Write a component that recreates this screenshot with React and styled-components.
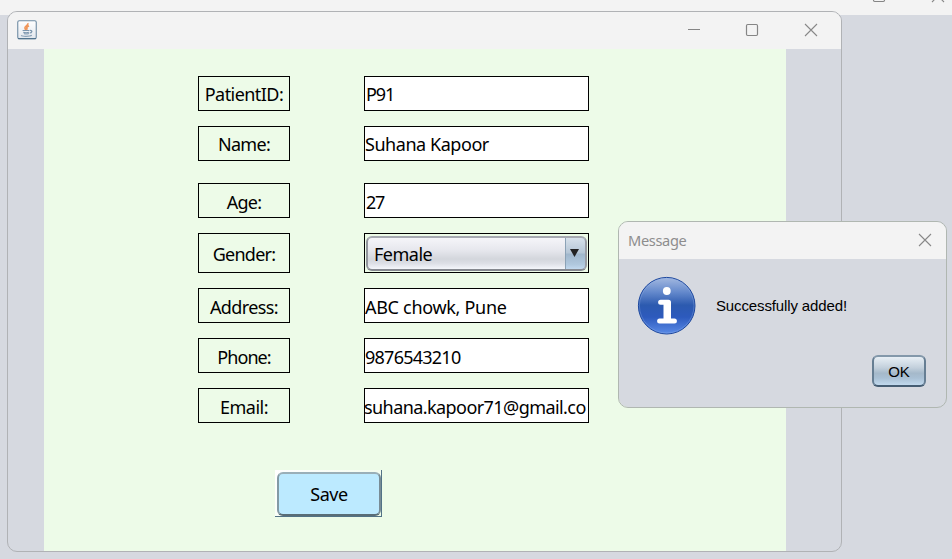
import React from "react";
import styled, { createGlobalStyle } from "styled-components";

const GlobalStyle = createGlobalStyle`
  * { box-sizing: border-box; }
  body { margin: 0; overflow: hidden; }
`;

const Desktop = styled.main`
  position: relative;
  width: 952px;
  height: 559px;
  overflow: hidden;
  background: #d6d9e0;
  font-family: "Noto Sans", sans-serif;
  color: #000;
`;

const BackBar = styled.div`
  display: flex;
  justify-content: flex-end;
  gap: 45px;
  height: 15px;
  padding-right: 7px;
  background: #f3f3f3;
  svg { margin-top: -11px; }
`;

const Frame = styled.section`
  position: absolute;
  left: ${(p) => p.$x}px;
  top: ${(p) => p.$y}px;
  width: ${(p) => p.$w}px;
  height: ${(p) => p.$h}px;
  display: flex;
  flex-direction: column;
  overflow: hidden;
  border: 1px solid ${(p) => p.$edge};
  border-radius: ${(p) => p.$radius}px;
  background: #d6d9e0;
  background-clip: padding-box;
`;

const TitleBar = styled.header`
  display: flex;
  align-items: center;
  justify-content: space-between;
  flex: none;
  height: 37px;
  padding: 0 ${(p) => p.$right}px ${(p) => p.$lift || 0}px 9px;
  background: #f3f3f3;
`;

const Controls = styled.div`
  display: flex;
  gap: 44px;
  svg:last-child { margin-left: 1px; }
`;

const DialogTitle = styled.span`
  color: #8d8d8d;
  font-size: 14.6px;
  letter-spacing: -0.35px;
  line-height: 20px;
`;

const Panel = styled.div`
  flex: 1;
  display: flex;
  flex-direction: column;
  margin: 0 55px 0 36px;
  padding: 27px 0 0 154px;
  background: #edfbe8;
`;

const Row = styled.div`
  display: flex;
  gap: 74px;
  flex: none;
  height: ${(p) => p.$h || 35}px;
  margin-bottom: ${(p) => p.$after || 15}px;
`;

const Text = styled.span`
  flex: none;
  font-size: 18px;
  line-height: 24px;
  white-space: pre;
  letter-spacing: ${(p) => p.$track || 0}px;
  margin-left: ${(p) => p.$shift || 0}px;
`;

const LabelBox = styled.div`
  width: 92px;
  border: 1px solid #000;
  display: flex;
  align-items: center;
  justify-content: center;
  padding-top: ${(p) => p.$top ?? 2}px;
`;

const Field = styled.div`
  width: 225px;
  overflow: hidden;
  display: flex;
  align-items: center;
  border: 1px solid #000;
  background: #fff;
  padding-top: ${(p) => p.$top ?? 2}px;
`;

const ComboFrame = styled.div`
  display: flex;
  width: 225px;
  padding: 1px 1px 1px 1px;
  border: 1px solid #000;
`;

const Combo = styled.div`
  flex: 1;
  display: flex;
  overflow: hidden;
  margin-top: 1px;
  border: 2px solid;
  border-color: #a6a9b1 #9a9da5 #85888f #92959d;
  border-radius: 6px;
  background: linear-gradient(#f5f5f9 0%, #e6e7ed 40%, #d3d6dc 68%, #dddfe6 82%, #f4f6fb 100%);
`;

const ComboValue = styled.div`
  flex: 1;
  display: flex;
  align-items: center;
  padding-left: 6px;
`;

const ComboArrow = styled.div`
  display: flex;
  align-items: center;
  justify-content: center;
  width: 22px;
  margin: -2px -2px -2px 0;
  padding-right: 2px;
  padding-bottom: 2px;
  border: 2px solid;
  border-color: #8297ab #7087a0 #56718b #8ba2b6;
  border-left-width: 1px;
  border-radius: 0 6px 6px 0;
  background: linear-gradient(#d7e1eb 0%, #b5c6d6 48%, #a0b7cc 52%, #b0c8de 85%, #c2d9ef 100%);
`;

const SaveFrame = styled.div`
  width: 107px;
  height: 47px;
  margin: 32px 0 0 77px;
  padding: 2px 0 0 2px;
  border-right: 1px solid #527286;
  border-bottom: 1px solid #527286;
  background: linear-gradient(135deg, #fff, #edfbe8);
`;

const SaveButton = styled.button`
  display: flex;
  align-items: center;
  justify-content: center;
  width: 104px;
  height: 44px;
  padding: 0;
  border: 2px solid;
  border-color: #9aafb8 #788c96 #596d77 #839aa5;
  border-radius: 6px;
  background: #bceaff;
  font-family: inherit;
  color: #000;
`;

const DialogBody = styled.div`
  flex: 1;
  display: flex;
  flex-direction: column;
  justify-content: space-between;
  padding: 17px 20px 20px 18px;
`;

const MessageLine = styled.div`
  display: flex;
  align-items: center;
  gap: 19px;
  font: 15px/20px "Liberation Sans", sans-serif;
  letter-spacing: -0.13px;
`;

const OkButton = styled.button`
  align-self: flex-end;
  width: 54px;
  height: 32px;
  padding: 1px 0 0;
  border: 2px solid;
  border-color: #8398aa #667e93 #455d73 #667e93;
  border-radius: 6px;
  background: linear-gradient(#e8eff5 0%, #c3d0dc 38%, #a5b9ca 58%, #a9c0d4 75%, #c1d9ee 100%);
  font: 15px/20px "Liberation Sans", sans-serif;
  color: #000;
`;

const Close = () => (
  <svg width="14" height="14" viewBox="0 0 14 14" fill="none" stroke="#888" strokeWidth="1.1">
    <path d="M1 1 13 13M13 1 1 13" />
  </svg>
);
const Maximize = () => (
  <svg width="14" height="14" viewBox="0 0 14 14" fill="none" stroke="#858585" strokeWidth="1.2">
    <rect x="1.5" y="1.5" width="11" height="11" rx="1.2" />
  </svg>
);
const Minimize = () => (
  <svg width="14" height="14" viewBox="0 0 14 14" stroke="#858585">
    <path d="M1 6.5H13" />
  </svg>
);

const JavaIcon = () => (
  <svg width="20" height="20" viewBox="0 0 20 20" fill="none">
    <defs>
      <linearGradient id="tile" x1="0" y1="0" x2="0" y2="1">
        <stop offset="0" stopColor="#fff" />
        <stop offset="1" stopColor="#e2e7ed" />
      </linearGradient>
    </defs>
    <rect x=".75" y=".75" width="18.5" height="18" rx="1.5" fill="url(#tile)" stroke="#6e8ba3" strokeWidth="1.1" />
    <path d="M1 18.7H19" stroke="#466985" strokeWidth="1" />
    <path d="M10.8 3.2C12 5.5 7 6.3 8 8.3Q8.2 9.2 9.2 10M12 5.8C10 6.8 8.8 7.7 10.4 9.6" stroke="#f0965a" strokeWidth="1.7" />
    <path d="M5.6 10.5H12.4M6.2 12.3Q9 13.2 12 12.3M13 10.5C16 10 15 12.8 12.7 13" stroke="#7c96ae" strokeWidth="1.2" />
    <path d="M6.8 13.4Q9 14.4 12 13.4M4.4 15.2C4 16.7 13 16.7 14.8 15.3" stroke="#8aa1b6" strokeWidth="1.1" />
  </svg>
);

const InfoIcon = () => (
  <svg width="60" height="60" viewBox="0 0 60 60">
    <defs>
      <linearGradient id="info" x1="0" y1="0" x2="0" y2="1">
        <stop offset="0" stopColor="#a4b9e0" />
        <stop offset=".26" stopColor="#6489cc" />
        <stop offset=".49" stopColor="#2c5aaf" />
        <stop offset=".7" stopColor="#2d5abd" />
        <stop offset="1" stopColor="#5a8be7" />
      </linearGradient>
    </defs>
    <circle cx="29.7" cy="29.7" r="28.3" fill="url(#info)" stroke="#1b469d" />
    <circle cx="29.7" cy="29.7" r="27.3" fill="none" stroke="#92b2e8" strokeOpacity=".35" />
    <circle cx="29.8" cy="15" r="3.9" fill="#fff" />
    <path d="M23.6 26.2H31.5V44.5M22.6 45H37.4" fill="none" stroke="#fff" strokeWidth="5" strokeLinecap="round" strokeLinejoin="round" />
    <path d="M26.5 26.2H34V45H26.5Z" fill="#fff" />
  </svg>
);

const identityRows = [
  { label: "PatientID:", lt: -0.55, value: "P91", vt: -1.1, shift: 1, top: 0 },
  { label: "Name:", lt: -0.7, value: "Suhana Kapoor", vt: -0.45, top: 0, gap: 22 },
  { label: "Age:", lt: -0.8, value: "27", vt: -1.2, shift: 1 },
];
const contactRows = [
  { label: "Address:", lt: -0.6, value: "ABC chowk, Pune", vt: -0.3 },
  { label: "Phone:", lt: -0.9, value: "9876543210", vt: -0.75 },
  { label: "Email:", lt: -0.5, value: "suhana.kapoor71@gmail.co", vt: -0.57, shift: -1 },
];

const FormRow = ({ label, lt, value, vt, gap, shift, top }) => (
  <Row $after={gap}>
    <LabelBox $top={top}><Text $track={lt}>{label}</Text></LabelBox>
    <Field $top={top}><Text $track={vt} $shift={shift}>{value}</Text></Field>
  </Row>
);

export default function App() {
  return (
    <Desktop>
      <GlobalStyle />
      <BackBar><Maximize /><Close /></BackBar>
      <Frame $x={7} $y={11} $w={835} $h={541} $edge="#b0b2b5" $radius={10}>
        <TitleBar $right={23} $lift={1}>
          <JavaIcon />
          <Controls><Minimize /><Maximize /><Close /></Controls>
        </TitleBar>
        <Panel>
          {identityRows.map((r) => <FormRow key={r.label} {...r} />)}
          <Row $h={40}>
            <LabelBox><Text $track={-0.75}>Gender:</Text></LabelBox>
            <ComboFrame>
              <Combo>
                <ComboValue><Text $track={-0.5}>Female</Text></ComboValue>
                <ComboArrow>
                  <svg width="9" height="8" viewBox="0 0 9 8"><path d="M0 0H9L4.5 8Z" fill="#222" /></svg>
                </ComboArrow>
              </Combo>
            </ComboFrame>
          </Row>
          {contactRows.map((r) => <FormRow key={r.label} {...r} />)}
          <SaveFrame><SaveButton><Text $track={-0.4}>Save</Text></SaveButton></SaveFrame>
        </Panel>
      </Frame>
      <Frame $x={618} $y={221} $w={329} $h={187} $edge="#b0b7b1" $radius={10}>
        <TitleBar $right={14} $lift={1}>
          <DialogTitle>Message</DialogTitle>
          <Close />
        </TitleBar>
        <DialogBody>
          <MessageLine><InfoIcon /><span>Successfully added!</span></MessageLine>
          <OkButton>OK</OkButton>
        </DialogBody>
      </Frame>
    </Desktop>
  );
}
